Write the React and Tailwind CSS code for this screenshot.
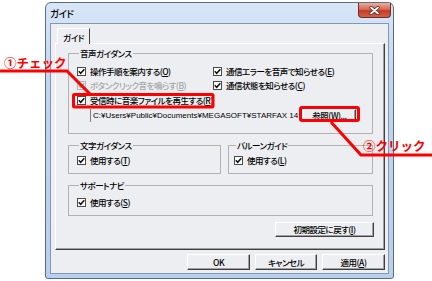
import React from "react";

const jp = "font-['Noto_Sans_CJK_JP',sans-serif] [font-feature-settings:'palt']";

function Check({ disabled }) {
  return (
    <span
      className={`flex h-[9px] w-[9px] shrink-0 items-center justify-center border ${
        disabled ? "border-[#b4b4b4] bg-[#eceef1]" : "border-[#4a4a4a] bg-white"
      }`}
    >
      <svg width="7" height="7" viewBox="0 0 7 7">
        <path d="M0.8 3.2 L2.7 5.3 L6.3 1.2" fill="none" stroke={disabled ? "#a8a8a8" : "#111"} strokeWidth="1.5" />
      </svg>
    </span>
  );
}

// ラベル + (アクセスキー)
function Opt({ label, k, disabled, className = "" }) {
  return (
    <div className={`flex h-[14px] items-center gap-[4px] ${className}`}>
      <Check disabled={disabled} />
      <span className={`whitespace-nowrap leading-[14px] ${disabled ? "text-[#a6a6a6]" : "text-black"}`}>
        {label}(<span className="underline">{k}</span>)
      </span>
    </div>
  );
}

function Btn({ children, className = "" }) {
  return (
    <div
      className={`flex items-center justify-center border border-t-white border-l-white border-r-[#404040] border-b-[#404040] bg-[#eceef1] shadow-[inset_-1px_-1px_0_#a0a0a0] leading-[13px] whitespace-nowrap ${className}`}
    >
      {children}
    </div>
  );
}

function Group({ title, className = "", children }) {
  return (
    <fieldset className={`min-w-0 border border-[#b2b2b2] px-[8px] ${className}`}>
      <legend className="ml-[2px] px-[1px] leading-[12px] text-black">{title}</legend>
      {children}
    </fieldset>
  );
}

export default function App() {
  return (
    <div className={`relative h-[281px] w-[432px] overflow-hidden bg-white pl-[45px] pt-[2px] text-[8.5px] font-medium tracking-[-0.5px] ${jp}`}>
      {/* ウィンドウ */}
      <div className="flex h-[277px] w-[349px] flex-col rounded-t-[6px] rounded-b-[3px] border border-[#5b6c84] bg-[linear-gradient(#d8e6f6,#c0d5f0_30%,#b9cfee)]">
        <div className="flex h-[20px] items-start justify-between">
          <span className="pl-[4px] pt-[3px] text-[9.5px] leading-[14px] text-black">ガイド</span>
          <div className="mr-[2px] flex h-[15px] w-[33px] items-center justify-center rounded-b-[4px] border border-t-0 border-[#6e2c22] bg-[linear-gradient(#eab0a2,#d9684f_45%,#c23c25_55%,#d2604a)]">
            <svg width="11" height="9" viewBox="0 0 11 9">
              <path d="M2 1.5 L9 7.5 M9 1.5 L2 7.5" stroke="#4a1a12" strokeWidth="3.2" strokeLinecap="round" />
              <path d="M2 1.5 L9 7.5 M9 1.5 L2 7.5" stroke="#fff" strokeWidth="1.8" strokeLinecap="round" />
            </svg>
          </div>
        </div>

        {/* クライアント領域 */}
        <div className="mx-[4px] h-[251px] border border-[#8498b4] bg-[#eceef1] pl-[4px] pt-[4px]">
          <div className="relative z-10 ml-[2px] flex h-[16px] w-[33px] items-center justify-center border border-b-0 border-t-white border-l-white border-r-[#404040] bg-[#eceef1] leading-[14px]">
            ガイド
          </div>
          <div className="-mt-[1px] flex h-[207px] w-[330px] flex-col border border-t-white border-l-white border-r-[#404040] border-b-[#404040] pl-[12px] pr-[11px] pt-[3px] shadow-[inset_-1px_-1px_0_#a0a0a0]">
            <Group title="音声ガイダンス" className="h-[87px]">
              <div className="flex pt-[5px]">
                <div className="flex w-[136px] flex-col">
                  <Opt label="操作手順を案内する" k="O" />
                  <Opt label="ボタンクリック音を鳴らす" k="B" disabled />
                </div>
                <div className="flex flex-col">
                  <Opt label="通信エラーを音声で知らせる" k="E" />
                  <Opt label="通信状態を知らせる" k="C" />
                </div>
              </div>
              <Opt label="受信時に音楽ファイルを再生する" k="R" className="mt-[1px]" />
              <div className="mt-[1px] flex h-[14px] items-center pl-[13px]">
                <div className="flex h-[13px] w-[208px] items-center border-l border-[#808080] pl-[2px] font-['Liberation_Sans',sans-serif] text-[8px] font-normal tracking-normal leading-[13px] whitespace-nowrap">
                  C:¥Users¥Public¥Documents¥MEGASOFT¥STARFAX 14
                </div>
                <Btn className="ml-[5px] h-[13px] w-[53px]">
                  参照(<span className="underline">W</span>)...
                </Btn>
              </div>
            </Group>

            <div className="mt-[5px] flex gap-[7px]">
              <Group title="文字ガイダンス" className="h-[35px] w-[153px]">
                <Opt label="使用する" k="T" className="mt-[2px]" />
              </Group>
              <Group title="バルーンガイド" className="h-[35px] w-[145px] pl-[5px]">
                <Opt label="使用する" k="L" className="mt-[2px]" />
              </Group>
            </div>

            <Group title="サポートナビ" className="mt-[5px] h-[37px]">
              <Opt label="使用する" k="S" className="mt-[4px]" />
            </Group>

            <div className="mt-[6px] flex justify-end">
              <Btn className="-mr-[1px] h-[15px] w-[99px]">
                初期設定に戻す(<span className="underline">I</span>)
              </Btn>
            </div>
          </div>

          <div className="mt-[4px] flex w-[330px] justify-end gap-[5px]">
            <Btn className="h-[16px] w-[63px]">OK</Btn>
            <Btn className="h-[16px] w-[62px]">キャンセル</Btn>
            <Btn className="h-[16px] w-[63px]">
              適用(<span className="underline">A</span>)
            </Btn>
          </div>
        </div>
      </div>

      {/* 注記（赤枠・引き出し線） */}
      <svg className="pointer-events-none absolute left-0 top-0" width="432" height="281" viewBox="0 0 432 281">
        <rect x="73.5" y="94.5" width="139.5" height="12.5" rx="1" fill="none" stroke="#ff0000" strokeWidth="3" />
        <rect x="300.5" y="107.5" width="58" height="13" rx="1.5" fill="none" stroke="#ff0000" strokeWidth="3" />
        <polyline points="0,71 67,71 90,94" fill="none" stroke="#ff0000" strokeWidth="3" />
        <polyline points="331,122 361,155 432,155" fill="none" stroke="#ff0000" strokeWidth="3" />
      </svg>
      <span className="absolute left-[4px] top-[55px] text-[12.5px] leading-[15px] font-bold tracking-normal text-[#ff0000] [font-feature-settings:normal]">
        ①チェック
      </span>
      <span className="absolute left-[363px] top-[138px] text-[12.5px] leading-[15px] font-bold tracking-normal text-[#ff0000] [font-feature-settings:normal]">
        ②クリック
      </span>
    </div>
  );
}
